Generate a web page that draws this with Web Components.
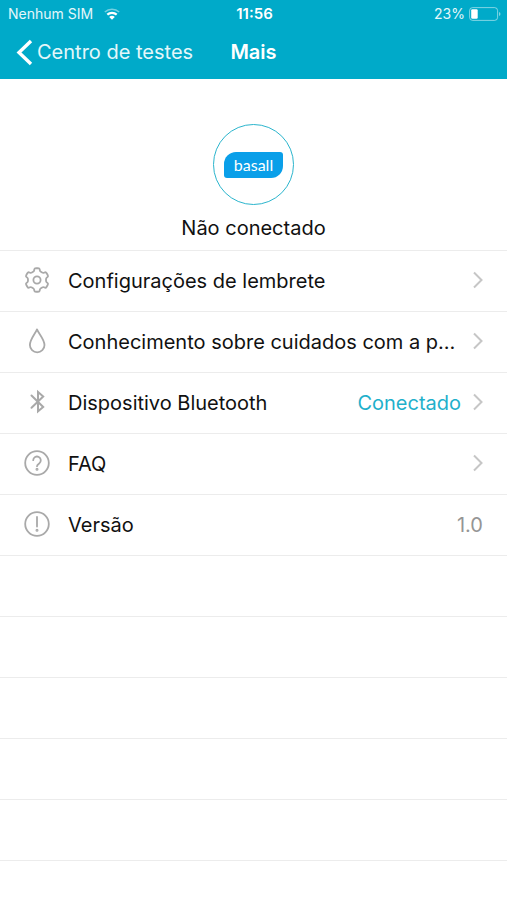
<!DOCTYPE html>
<html lang="pt-BR">
<head>
<meta charset="utf-8">
<meta name="viewport" content="width=device-width, initial-scale=1">
<title>Mais</title>
<style>
  body {
    margin: 0;
    background: #fff;
    color: #111;
    font-family: Inter, "Liberation Sans", sans-serif;
    --brand: #00aac9;
    --line: #ececec;
    --icon: #a9a9a9;
  }
</style>
</head>
<body>
<more-screen></more-screen>

<script>
const define = (name, html, setup) => {
  const template = document.createElement('template');
  template.innerHTML = html;
  customElements.define(name, class extends HTMLElement {
    constructor() {
      super();
      this.attachShadow({ mode: 'open' }).append(template.content.cloneNode(true));
    }
    connectedCallback() {
      if (setup) setup(this, this.shadowRoot);
    }
  });
};

// Closed outline of a six-tooth gear with softened corners.
const gearPath = () => {
  const pts = [];
  for (let i = 0; i < 6; i++) {
    for (const [angle, r] of [[-19, 9.2], [-12, 12], [12, 12], [19, 9.2]]) {
      const a = (i * 60 + angle) * Math.PI / 180;
      pts.push([13 + r * Math.sin(a), 13 - r * Math.cos(a)]);
    }
  }
  const mix = (p, q, t) => [p[0] + (q[0] - p[0]) * t, p[1] + (q[1] - p[1]) * t].map(n => n.toFixed(2)).join(' ');
  return pts.map((p, i) => {
    const prev = pts[(i + pts.length - 1) % pts.length];
    const next = pts[(i + 1) % pts.length];
    return `${i ? 'L' : 'M'}${mix(p, prev, 0.3)}Q${p[0].toFixed(2)} ${p[1].toFixed(2)} ${mix(p, next, 0.3)}`;
  }).join('') + 'Z';
};

const icons = {
  gear: `<path d="${gearPath()}"/><circle cx="13" cy="13" r="3.6"/>`,
  drop: '<path d="M13 1.4C11.2 5.8 5.9 11.3 5.9 17a7.3 7.3 0 0 0 14.6 0C20.5 11.3 14.8 5.8 13 1.4Z"/>',
  bluetooth: '<path stroke-width="2" stroke-linejoin="miter" d="M7.5 6.500 19.200 18 14 22.300V3L19.200 7.500 7.500 18.800"/>',
  question: '<circle cx="13" cy="13" r="11.8"/><path d="M9.2 10.2a3.8 3.8 0 1 1 6 3.2C13.700 14.500 13 15 13 16.200"/><circle cx="13" cy="19.300" r=".6"/>',
  alert: '<circle cx="13" cy="13" r="11.8"/><path d="M13 6v9.500"/><circle cx="13" cy="19.300" r=".6"/>'
};

define('line-icon', `
  <style>
    :host { display: block; width: 26px; height: 26px; color: var(--icon); }
    svg { display: block; width: 100%; height: 100%; fill: none; stroke: currentColor;
          stroke-width: 1.8; stroke-linecap: round; stroke-linejoin: round; }
  </style>
  <svg viewBox="0 0 26 26" aria-hidden="true"></svg>`,
  (host, root) => { root.querySelector('svg').innerHTML = icons[host.getAttribute('name')]; });

define('status-bar', `
  <style>
    :host { display: grid; grid-template-columns: 1fr auto 1fr; align-items: center;
            height: 27px; padding: 0 6px 0 8px; color: #e4f7fa; font-size: 14px; }
    .side { display: flex; align-items: center; gap: 11px; }
    .end { justify-content: flex-end; gap: 4px; }
    .time { font-size: 15px; font-weight: 600; color: #fff; }
    svg { display: block; }
  </style>
  <div class="side">
    <span>Nenhum SIM</span>
    <svg width="16" height="12" viewBox="0 0 16 12" aria-hidden="true" fill="none" stroke="#fff">
      <path d="M.8 4a10.500 10.500 0 0 1 14.400 0" stroke-width="1.500" opacity=".45"/>
      <path d="M3.300 6.600a7 7 0 0 1 9.400 0" stroke-width="2.200"/>
      <path d="M8 11.800 5.200 9a3.900 3.900 0 0 1 5.600 0Z" fill="#fff" stroke="none"/>
    </svg>
  </div>
  <span class="time">11:56</span>
  <div class="side end">
    <span>23%</span>
    <svg width="32" height="14" viewBox="0 0 32 14" aria-hidden="true">
      <rect x=".6" y=".6" width="28" height="12.800" rx="3" fill="none" stroke="#fff" stroke-opacity=".5"/>
      <rect x="2.200" y="2.200" width="6.500" height="9.600" rx="1.200" fill="#fff"/>
      <path d="M30 5v4q1.500-.5 1.500-2T30 5Z" fill="#fff" opacity=".5"/>
    </svg>
  </div>`);

define('nav-bar', `
  <style>
    :host { display: grid; grid-template-columns: 1fr auto 1fr; align-items: center;
            height: 50px; padding: 0 16px 2px; color: #fff; font-size: 20px; }
    a { display: flex; align-items: center; gap: 4px; color: #e4f7fa; text-decoration: none; white-space: nowrap; }
    svg { display: block; }
    h1 { margin: 0; font-size: 20px; font-weight: 600; }
  </style>
  <a href="#centro">
    <svg width="17" height="27" viewBox="0 0 17 27" aria-hidden="true" fill="none" stroke="#fff" stroke-width="3.400">
      <path d="M15 2 3 13.500 15 25"/>
    </svg>
    <slot name="back"></slot>
  </a>
  <h1><slot></slot></h1>`);

define('device-profile', `
  <style>
    :host { display: flex; flex-direction: column; align-items: center; gap: 10px;
            padding: 45px 16px 9px; border-bottom: 1px solid var(--line); }
    .ring { display: grid; place-items: center; box-sizing: border-box; width: 81px; height: 81px;
            border: 1px solid #2bb5cd; border-radius: 50%; }
    .logo { display: grid; place-items: center; width: 59px; height: 26px; background: #0a9fe9;
            border-radius: 12px 3px 12px 3px; color: #fff; font: 16px/24px Lato, sans-serif; }
    p { margin: 0; font-size: 20px; line-height: 26px; }
  </style>
  <div class="ring"><span class="logo">basall</span></div>
  <p><slot></slot></p>`);

define('settings-row', `
  <style>
    :host { display: block; border-bottom: 1px solid var(--line); }
    .row { display: flex; align-items: center; height: 60px; padding: 0 24px;
           color: inherit; font-size: 20px; line-height: 26px; text-decoration: none; }
    line-icon { flex: none; margin: 0 18px 2px 0; }
    .label { flex: 1; min-width: 0; overflow: hidden; text-overflow: ellipsis; white-space: nowrap; }
    .value { color: #959595; }
    .link .value { color: #1fb0cb; }
    .chevron { flex: none; display: block; margin: 0 0 2px 12px; }
  </style>`,
  (host, root) => {
    if (root.querySelector('.row')) return;
    const href = host.getAttribute('href');
    const row = document.createElement(href ? 'a' : 'div');
    row.className = href ? 'row link' : 'row';
    if (href) row.href = href;
    row.innerHTML = `
      <line-icon name="${host.getAttribute('icon')}"></line-icon>
      <span class="label"><slot></slot></span>
      <span class="value"><slot name="value"></slot></span>
      ${href ? `<svg class="chevron" width="10" height="18" viewBox="0 0 10 18" aria-hidden="true"
        fill="none" stroke="#c6c6c6" stroke-width="2"><path d="M1 1.500 8.500 9 1 16.500"/></svg>` : ''}`;
    root.append(row);
  });

define('empty-row', `
  <style>:host { display: block; height: 60px; border-bottom: 1px solid var(--line); }</style>`);

define('more-screen', `
  <style>
    :host { display: block; }
    header { background: var(--brand); }
  </style>
  <header>
    <status-bar></status-bar>
    <nav-bar><span slot="back">Centro de testes</span>Mais</nav-bar>
  </header>
  <main>
    <device-profile>Não conectado</device-profile>
    <settings-row icon="gear" href="#lembrete">Configurações de lembrete</settings-row>
    <settings-row icon="drop" href="#cuidados">Conhecimento sobre cuidados com a pele</settings-row>
    <settings-row icon="bluetooth" href="#bluetooth">Dispositivo Bluetooth<span slot="value">Conectado</span></settings-row>
    <settings-row icon="question" href="#faq">FAQ</settings-row>
    <settings-row icon="alert">Versão<span slot="value">1.0</span></settings-row>
    <empty-row></empty-row>
    <empty-row></empty-row>
    <empty-row></empty-row>
    <empty-row></empty-row>
    <empty-row></empty-row>
  </main>`);
</script>
</body>
</html>
